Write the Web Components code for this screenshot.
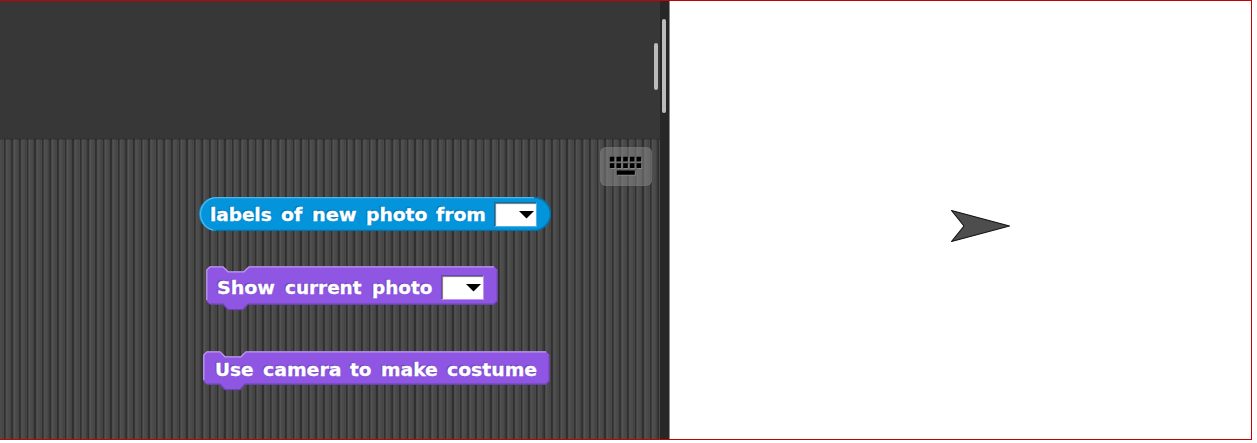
<!DOCTYPE html>
<html lang="en"><head><meta charset="utf-8"><title>Snap camera blocks</title>
<style>html,body{margin:0;background:#fff}body{width:1257px;height:443px;overflow:hidden;font-family:"DejaVu Sans",Verdana,sans-serif}
.b1{left:199px;top:58px}.b2{left:206px;top:127px}.b3{left:203px;top:212px}</style></head>
<body>
<snap-ide>
  <script-area slot="scripts">
    <snap-block class="b1" kind="reporter" width="352" height="34" size="18.4" top="5" gap="9" words="labels:62,of:21.5,new:45,photo:61,from:50" pad="11" menu="295"></snap-block>
    <snap-block class="b2" kind="command" width="292" height="39" size="18.4" top="9" gap="10" words="Show:58,current:77,photo:60" pad="11" menu="235"></snap-block>
    <snap-block class="b3" kind="command" width="347" height="34" size="18.4" top="6" gap="9.5" words="Use:38,camera:78,to:21,make:57,costume:90" pad="12"></snap-block>
  </script-area>
  <snap-stage slot="stage"></snap-stage>
</snap-ide>
<script>
class SnapIde extends HTMLElement{constructor(){super();this.attachShadow({mode:"open"}).innerHTML=`<style>
:host{display:grid;grid-template-columns:660px 10px 581px;box-sizing:border-box;width:1252px;height:440px;border:solid #c80000;border-width:1px 1px 1px 0}
.left{display:grid;grid-template-rows:138px 300px}
.palette{background:#373737;display:flex;justify-content:flex-end;align-items:flex-start;box-shadow:inset 0 -1px #343434}
.thumb{width:4px;border-radius:2px;background:#bcbcbc}
.a{height:47px;margin:42px 2px 0 0}.b{height:94px;margin:18px 0 0 2px}
.divider{background:#272727;box-shadow:inset -1px 0 #8c8c8c}
</style><div class="left"><div class="palette"><div class="thumb a"></div></div><slot name="scripts"></slot></div><div class="divider"><div class="thumb b"></div></div><slot name="stage"></slot>`}}
class ScriptArea extends HTMLElement{constructor(){super();this.attachShadow({mode:"open"}).innerHTML=`<style>
:host{display:block;position:relative;height:300px;box-shadow:inset 0 1px rgba(0,0,0,.15);background:repeating-linear-gradient(90deg,#4c4c4c 0,#494949 2px,#404040 3px,#4b4b4b 3.6px,#303030 4px,#303030 5.2px,#474747 5.8px,#555 6.8px,#4c4c4c 7.6px)}
::slotted(*){position:absolute}
.key{position:absolute;left:600px;top:8px;width:52px;height:39px;border-radius:6px;background:rgba(140,140,140,.5);box-shadow:inset 0 0 2px #777,0 0 1px #333}
svg{display:block}
</style><slot></slot><div class="key"><svg width="52" height="39"><defs><g id="keys"><path d="M9.8 9.8h4.6v4.6h-4.6zM16.5 9.8h4.6v4.6h-4.6zM23.2 9.8h4.6v4.6h-4.6zM29.9 9.8h4.6v4.6h-4.6zM36.6 9.8h4.6v4.6h-4.6zM9.8 16.3h4.6v4.6h-4.6zM16.5 16.3h4.6v4.6h-4.6zM23.2 16.3h4.6v4.6h-4.6zM29.9 16.3h4.6v4.6h-4.6zM36.6 16.3h4.6v4.6h-4.6zM16.8 23.4h18v4.4h-18z"/></g></defs><use href="#keys" x="1" y="1" fill="#999" opacity=".6"/><use href="#keys"/></svg></div>`}}
class SnapBlock extends HTMLElement{constructor(){super();this.attachShadow({mode:"open"})}
connectedCallback(){const g=n=>this.getAttribute(n),w=+g("width"),h=+g("height"),r=g("kind")==="reporter";
const d=r?`M17 0H${w-17}A17 17 0 0 1 ${w-17} ${h}H17A17 17 0 0 1 17 0Z`
:`M.5 4L4 .5H17L22 5.5H38L43 .5H${w-4}L${w-.5} 4V${h-4}L${w-4} ${h-.5}H42L37 ${h+5}H22L17 ${h-.5}H4L.5 ${h-4}Z`;
const hi=r?`M14 ${h-1}A16.4 16.4 0 0 1 17 .7H${w-17}`:`M.8 ${h-5}V4L4 .8H17L22 5.8H38L43 .8H${w-4}`;
const lo=r?`M17 ${h-.7}H${w-17}A16.3 16.3 0 0 0 ${w-17} .7`:`M4 ${h-.8}H17L22 ${h+4.7}H37L42 ${h-.8}H${w-4}L${w-.8} ${h-4}V5`;
const base=r?"#0494dc":"#8f56e3",light=r?"#4fb6eb":"#bd9af0",dark=r?"#0370a8":"#6e42af";
const words=g("words").split(",").map(s=>{const[t,n]=s.split(":");return`<span style="width:${n}px" data-w="${n}"><b>${t}</b></span>`}).join("");
const m=g("menu");
this.shadowRoot.innerHTML=`<style>
:host{display:block;width:${w}px;height:${h}px}
.shape{position:absolute;left:0;top:0;overflow:visible}
.label{position:relative;display:flex;gap:${g("gap")}px;padding:${g("top")}px 0 0 ${g("pad")}px;color:#fff;font-size:${g("size")}px;line-height:26px;-webkit-text-stroke:.3px #fff;text-shadow:-1px -1px 1px ${dark};white-space:nowrap}
span{display:block;flex:none}b{display:inline-block;transform-origin:0 50%}
.menu{position:absolute;left:${m||0}px;top:${r?5:9}px;box-sizing:border-box;width:43px;height:25px;background:#fff;border:1px solid;border-color:${dark} ${light} ${light} ${dark};box-shadow:inset 1px 1px 1px #777}
.menu svg{display:block;margin:8px 0 0 24px}
</style><svg class="shape" width="${w}" height="${h+7}"><path d="${d}" fill="${base}"/><path d="${lo}" fill="none" stroke="${dark}" stroke-width="1.3"/><path d="${hi}" fill="none" stroke="${light}" stroke-width="1.3"/></svg><div class="label">${words}</div>${m?`<div class="menu"><svg width="15" height="8"><path d="M0 0H15L7.5 7.5Z"/></svg></div>`:""}`;
this.shadowRoot.querySelectorAll("span").forEach(s=>{const b=s.firstChild;b.style.transform=`scaleX(${s.dataset.w/b.offsetWidth})`});
}}
class SnapStage extends HTMLElement{constructor(){super();this.attachShadow({mode:"open"}).innerHTML=`<style>:host{display:block;background:#fff}svg{display:block}</style><svg width="581" height="438"><path d="M281.5 209.5L339.5 225L281.5 240.5L294 225Z" fill="#4d4d4d" stroke="#111" stroke-width="1.1" stroke-linejoin="round"/></svg>`}}
customElements.define("snap-ide",SnapIde);customElements.define("script-area",ScriptArea);customElements.define("snap-block",SnapBlock);customElements.define("snap-stage",SnapStage);
</script></body></html>
